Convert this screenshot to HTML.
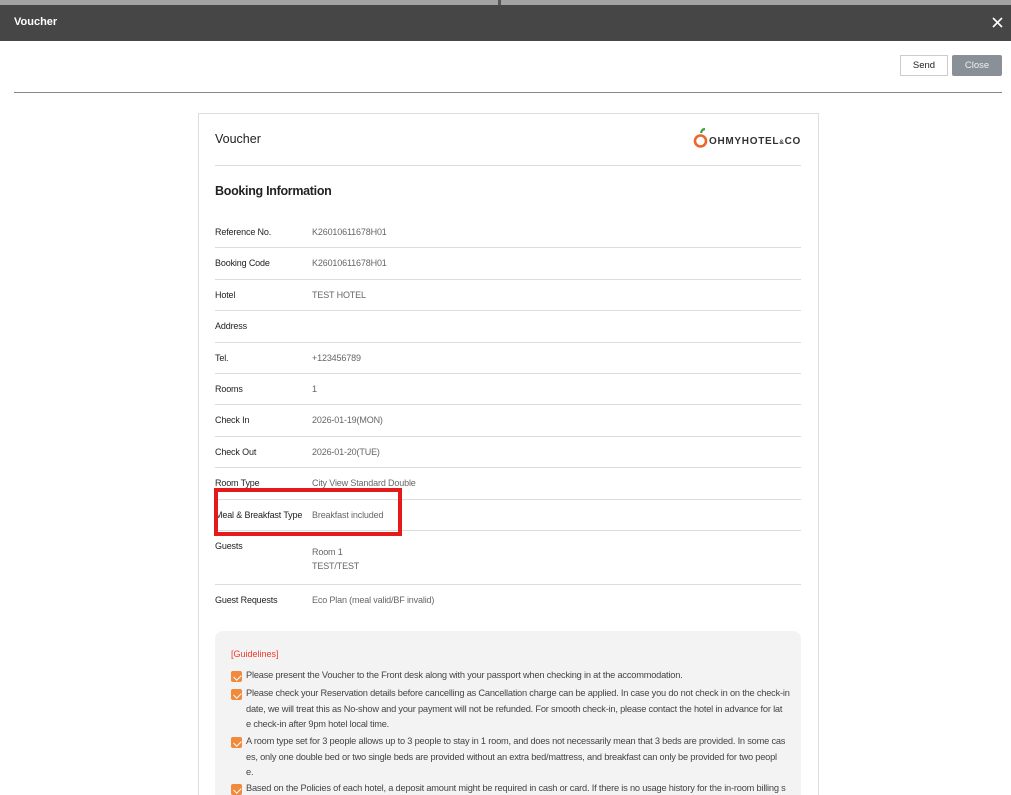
<!DOCTYPE html>
<html><head><meta charset="utf-8"><style>
*{margin:0;padding:0;box-sizing:border-box}
html,body{width:1011px;height:795px;overflow:hidden}
body{background:#fff;font-family:"Liberation Sans",sans-serif;position:relative}
.a{position:absolute}
.lbl{position:absolute;left:215px;font-size:9px;color:#222;letter-spacing:-0.15px}
.val{position:absolute;left:312px;font-size:9px;color:#666;letter-spacing:-0.15px}
.ln{position:absolute;left:215px;width:586px;height:1px;background:#dcdcdc}
.gi{position:absolute;left:246px;font-size:9.25px;color:#444;line-height:15.5px;letter-spacing:-0.2px;white-space:nowrap}
.cb{position:absolute;left:231px;width:11px;height:11px;background:#f08a3c;border-radius:2px}
.cb:after{content:"";position:absolute;left:3.5px;top:1.5px;width:3.5px;height:6px;border:solid #fff;border-width:0 1.5px 1.5px 0;transform:rotate(45deg)}
</style></head><body>
<div class="a" style="left:0;top:0;width:1011px;height:5px;background:#a3a3a3"></div>
<div class="a" style="left:498px;top:0;width:3px;height:5px;background:#555"></div>
<div class="a" style="left:0;top:5px;width:1011px;height:36px;background:#464646"></div>
<div class="a" style="left:14px;top:16px;color:#fff;font-weight:bold;font-size:11px">Voucher</div>
<svg class="a" style="left:992px;top:17px" width="11" height="11" viewBox="0 0 11 11"><path d="M1 1L10 10M10 1L1 10" stroke="#fff" stroke-width="1.6"/></svg>
<div class="a" style="left:900px;top:55px;width:48px;height:21px;border:1px solid #ccc;font-size:9.5px;text-align:center;line-height:19px;color:#222">Send</div>
<div class="a" style="left:952px;top:55px;width:50px;height:21px;background:#8a9098;border-radius:2px;font-size:9.5px;text-align:center;line-height:21px;color:#eee">Close</div>
<div class="a" style="left:14px;top:92px;width:988px;height:1px;background:#888"></div>

<div class="a" style="left:198px;top:113px;width:621px;height:700px;border:1px solid #ddd"></div>
<div class="a" style="left:215px;top:132px;font-size:12.5px;color:#222">Voucher</div>
<svg class="a" style="left:693px;top:128px" width="16" height="22" viewBox="0 0 16 22"><path d="M8 5 Q9 1 12 1" stroke="#3aa040" stroke-width="2.2" fill="none"/><circle cx="7.5" cy="13" r="5.5" stroke="#f0642a" stroke-width="2.6" fill="none"/></svg>
<div class="a" style="left:709px;top:136px;font-size:10px;font-weight:bold;color:#333;letter-spacing:0.7px">OHMYHOTEL<span style="font-size:6.5px">&amp;</span>CO</div>
<div class="ln" style="top:165px"></div>
<div class="a" style="left:215px;top:184px;font-size:12.5px;font-weight:bold;color:#222;letter-spacing:-0.3px">Booking Information</div>

<div class="lbl" style="top:227px">Reference No.</div><div class="val" style="top:227px">K26010611678H01</div><div class="ln" style="top:247px"></div>
<div class="lbl" style="top:258px">Booking Code</div><div class="val" style="top:258px">K26010611678H01</div><div class="ln" style="top:279px"></div>
<div class="lbl" style="top:290px">Hotel</div><div class="val" style="top:290px">TEST HOTEL</div><div class="ln" style="top:310px"></div>
<div class="lbl" style="top:321px">Address</div><div class="ln" style="top:342px"></div>
<div class="lbl" style="top:353px">Tel.</div><div class="val" style="top:353px">+123456789</div><div class="ln" style="top:373px"></div>
<div class="lbl" style="top:384px">Rooms</div><div class="val" style="top:384px">1</div><div class="ln" style="top:404px"></div>
<div class="lbl" style="top:415px">Check In</div><div class="val" style="top:415px">2026-01-19(MON)</div><div class="ln" style="top:436px"></div>
<div class="lbl" style="top:447px">Check Out</div><div class="val" style="top:447px">2026-01-20(TUE)</div><div class="ln" style="top:467px"></div>
<div class="lbl" style="top:478px">Room Type</div><div class="val" style="top:478px">City View Standard Double</div><div class="ln" style="top:499px"></div>
<div class="lbl" style="top:510px">Meal &amp; Breakfast Type</div><div class="val" style="top:510px">Breakfast included</div><div class="ln" style="top:530px"></div>
<div class="lbl" style="top:541px">Guests</div><div class="val" style="top:545px;line-height:14px">Room 1<br>TEST/TEST</div><div class="ln" style="top:584px"></div>
<div class="lbl" style="top:595px">Guest Requests</div><div class="val" style="top:595px">Eco Plan (meal valid/BF invalid)</div>

<div class="a" style="left:214px;top:488px;width:188px;height:48px;border:4px solid #e31b1b"></div>

<div class="a" style="left:215px;top:631px;width:586px;height:180px;background:#f3f3f3;border-radius:8px"></div>
<div class="a" style="left:231px;top:649px;font-size:9px;color:#f03a2a">[Guidelines]</div>
<div class="cb" style="top:671px"></div><div class="gi" style="top:668px">Please present the Voucher to the Front desk along with your passport when checking in at the accommodation.</div>
<div class="cb" style="top:689px"></div><div class="gi" style="top:686px">Please check your Reservation details before cancelling as Cancellation charge can be applied. In case you do not check in on the check-in<br>date, we will treat this as No-show and your payment will not be refunded. For smooth check-in, please contact the hotel in advance for lat<br>e check-in after 9pm hotel local time.</div>
<div class="cb" style="top:737px"></div><div class="gi" style="top:734px">A room type set for 3 people allows up to 3 people to stay in 1 room, and does not necessarily mean that 3 beds are provided. In some cas<br>es, only one double bed or two single beds are provided without an extra bed/mattress, and breakfast can only be provided for two peopl<br>e.</div>
<div class="cb" style="top:784px"></div><div class="gi" style="top:781px">Based on the Policies of each hotel, a deposit amount might be required in cash or card. If there is no usage history for the in-room billing s</div>
</body></html>
